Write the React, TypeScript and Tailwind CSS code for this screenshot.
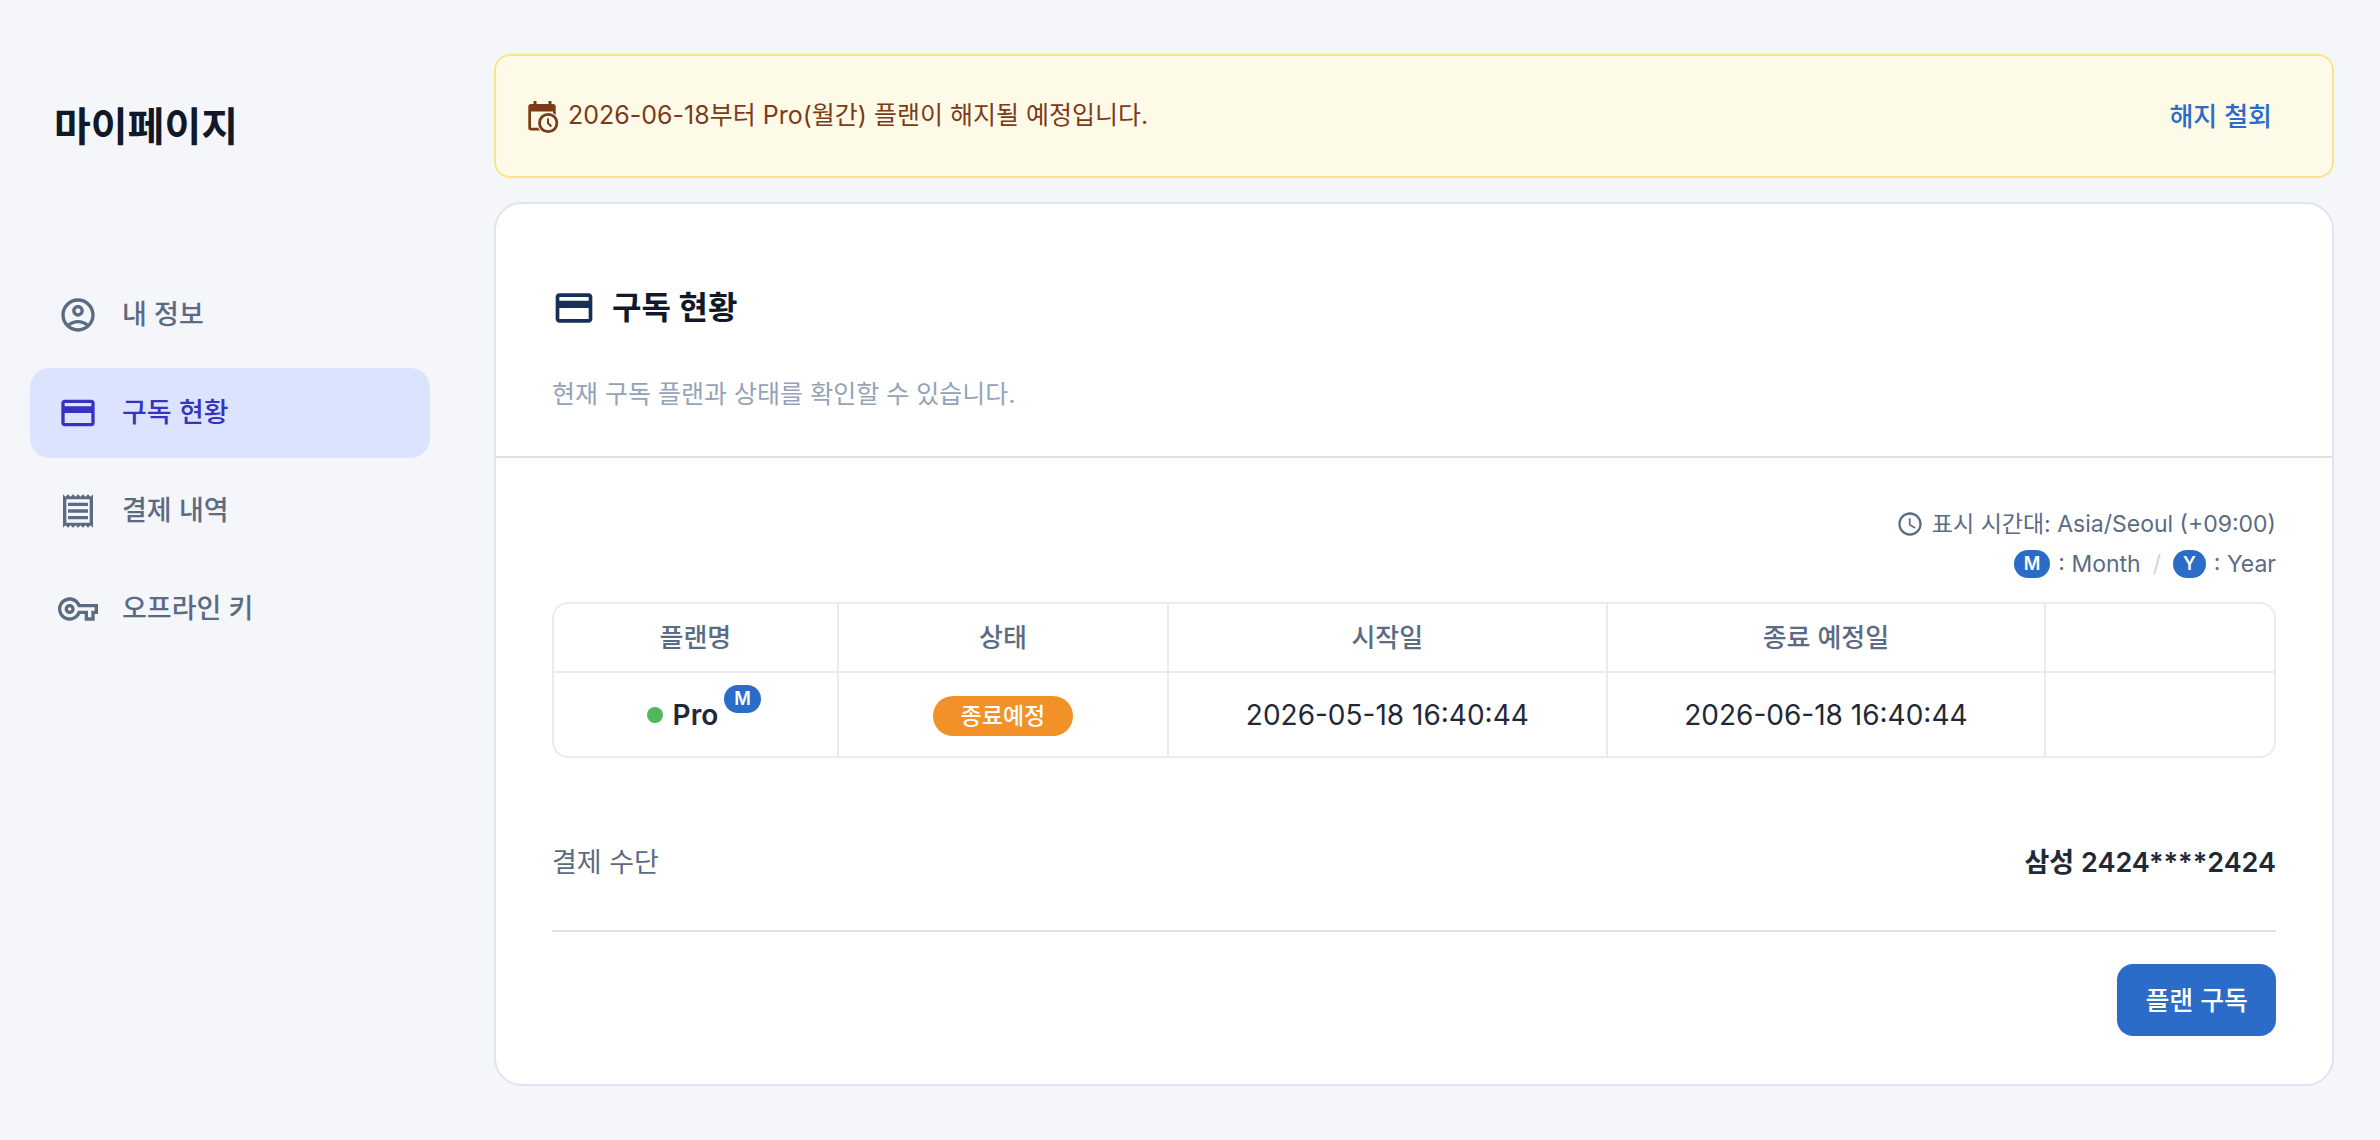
import { useState } from "react"
import {
  MdOutlineAccountCircle,
  MdOutlineCreditCard,
  MdOutlineReceipt,
  MdOutlineVpnKey,
  MdSchedule,
} from "react-icons/md"
import type { IconType } from "react-icons"

// ─────────────────────────────────────────────────────────────────────────────
// Data
// ─────────────────────────────────────────────────────────────────────────────

type NavItem = {
  id:    string
  label: string
  icon:  IconType
}

const NAV: NavItem[] = [
  { id: "profile",      label: "내 정보",    icon: MdOutlineAccountCircle },
  { id: "subscription", label: "구독 현황",  icon: MdOutlineCreditCard },
  { id: "payments",     label: "결제 내역",  icon: MdOutlineReceipt },
  { id: "offline-key",  label: "오프라인 키", icon: MdOutlineVpnKey },
]

const PLANS = [
  { name: "Pro", cycle: "M", status: "종료예정", start: "2026-05-18 16:40:44", end: "2026-06-18 16:40:44" },
]

// ─────────────────────────────────────────────────────────────────────────────
// Components
// ─────────────────────────────────────────────────────────────────────────────

function CalendarClockIcon() {
  return (
    <svg viewBox="0 0 36 36" className="size-9 shrink-0" fill="none" aria-hidden="true">
      <path
        fill="currentColor"
        d="M9.500 3h3v3h12V3h3v3h1.500a2.700 2.700 0 0 1 2.700 2.700V17a11 11 0 0 0-2.700-1.700V13H7v16.700h7.300a11 11 0 0 0 1.700 2.800H7a2.700 2.700 0 0 1-2.700-2.700V8.700A2.700 2.700 0 0 1 7 6h2.500z"
      />
      <path fill="currentColor" d="M5 8h26v5.500H5z" />
      <circle cx="24.200" cy="25" r="8.700" stroke="currentColor" strokeWidth="2.800" />
      <path d="M24 20.500v4.700l3.400 3.200" stroke="currentColor" strokeWidth="2" />
    </svg>
  )
}

function CycleBadge({ cycle }: { cycle: string }) {
  return (
    <span className="inline-flex h-7 items-center rounded-full bg-[#2a6cc8] px-2.5 text-lg font-semibold text-white">
      {cycle}
    </span>
  )
}

function Sidebar({ active, onSelect }: { active: string; onSelect: (id: string) => void }) {
  return (
    <aside className="w-[430px] shrink-0 pl-[30px] pt-24">
      <h1 className="pl-6 text-[40px] leading-[62px] font-bold text-[#111827]">마이페이지</h1>

      <nav className="mt-28 flex flex-col gap-2">
        {NAV.map(({ id, label, icon: Icon }) => (
          <a
            key={id}
            href={`#${id}`}
            onClick={() => onSelect(id)}
            className={`flex h-[90px] items-center gap-6 rounded-[20px] px-7 text-[27px] font-medium ${
              active === id ? "bg-[#dbe3fe] text-[#3733c0]" : "text-[#5b6b84]"
            }`}
          >
            <Icon className="size-10 shrink-0" />
            {label}
          </a>
        ))}
      </nav>
    </aside>
  )
}

function CancelNotice() {
  return (
    <div className="flex min-h-[124px] items-center justify-between rounded-2xl border-2 border-[#fbe38a] bg-[#fefae8] pr-[60px] pl-7">
      <p className="flex items-center gap-2 text-[25px] text-[#7c3a16]">
        <CalendarClockIcon />
        2026-06-18부터 Pro(월간) 플랜이 해지될 예정입니다.
      </p>
      <button type="button" className="text-[26px] font-medium text-[#2a6cc8]">
        해지 철회
      </button>
    </div>
  )
}

function PlanTable() {
  return (
    <div className="mt-[22px] overflow-hidden rounded-2xl border-2 border-[#ebebeb]">
      <table className="w-full table-fixed text-center">
        <colgroup>
          <col className="w-[16.5%]" />
          <col className="w-[19.2%]" />
          <col className="w-[25.5%]" />
          <col className="w-[25.5%]" />
          <col />
        </colgroup>
        <thead>
          <tr className="h-[68px] divide-x-2 divide-[#ebebeb] border-b-2 border-[#ebebeb] text-[26px] text-[#5b6b84]">
            <th className="font-medium">플랜명</th>
            <th className="font-medium">상태</th>
            <th className="font-medium">시작일</th>
            <th className="font-medium">종료 예정일</th>
            <td />
          </tr>
        </thead>
        <tbody>
          {PLANS.map(p => (
            <tr key={p.name} className="h-[84px] divide-x-2 divide-[#ebebeb] text-[28px] text-[#1f2937]">
              <td>
                {/* name stays centred, dot and badge hang on either side */}
                <div className="grid grid-cols-[1fr_auto_1fr] items-center">
                  <span className="mr-2.5 size-4 justify-self-end rounded-full bg-[#4fb85c]" />
                  <span className="font-semibold">{p.name}</span>
                  <span className="mb-8 ml-1.5 flex">
                    <CycleBadge cycle={p.cycle} />
                  </span>
                </div>
              </td>
              <td>
                <span className="inline-flex h-10 items-center rounded-full bg-[#f39129] px-7 text-[23px] font-medium text-white">
                  {p.status}
                </span>
              </td>
              <td>{p.start}</td>
              <td>{p.end}</td>
              <td />
            </tr>
          ))}
        </tbody>
      </table>
    </div>
  )
}

function SubscriptionCard() {
  return (
    <section className="mt-6 rounded-[28px] border-2 border-[#dfe5ee] bg-white">
      <header className="border-b-2 border-[#e0e0e0] px-14 pt-20 pb-11">
        <h2 className="flex items-center gap-4 text-[32px] leading-[48px] font-bold text-[#111827]">
          <MdOutlineCreditCard className="size-11 shrink-0 text-[#172f57]" />
          구독 현황
        </h2>
        <p className="mt-11 text-[25px] leading-9 text-[#94a3b8]">
          현재 구독 플랜과 상태를 확인할 수 있습니다.
        </p>
      </header>

      <div className="px-14 pt-[50px] pb-12">
        <div className="flex flex-col items-end gap-2 text-[23px] leading-8 text-[#5b6b84]">
          <div className="flex items-center gap-2">
            <MdSchedule className="size-7" />
            표시 시간대: Asia/Seoul (+09:00)
          </div>
          <div className="flex items-center gap-2">
            <CycleBadge cycle="M" />
            <span>: Month</span>
            <span className="px-1 text-[#cbd5e1]">/</span>
            <CycleBadge cycle="Y" />
            <span>: Year</span>
          </div>
        </div>

        <PlanTable />

        <dl className="mt-[78px] flex items-center justify-between border-b-2 border-[#e0e0e0] pb-10 text-[27px] leading-[54px]">
          <dt className="text-[#5b6b84]">결제 수단</dt>
          <dd className="font-semibold text-[#1f2937]">삼성 2424****2424</dd>
        </dl>

        <div className="mt-8 flex justify-end">
          <button
            type="button"
            className="h-[72px] rounded-2xl bg-[#2a6cc8] px-7 text-[26px] font-medium text-white"
          >
            플랜 구독
          </button>
        </div>
      </div>
    </section>
  )
}

// ─────────────────────────────────────────────────────────────────────────────
// Main export
// ─────────────────────────────────────────────────────────────────────────────

export default function App() {
  const [active, setActive] = useState("subscription")

  return (
    <div className="flex min-h-screen bg-[#f4f6fa] font-['Inter','Noto_Sans_CJK_KR',sans-serif]">
      <Sidebar active={active} onSelect={setActive} />
      <main className="min-w-0 flex-1 pt-[54px] pr-[46px] pb-[54px] pl-16">
        <CancelNotice />
        <SubscriptionCard />
      </main>
    </div>
  )
}
